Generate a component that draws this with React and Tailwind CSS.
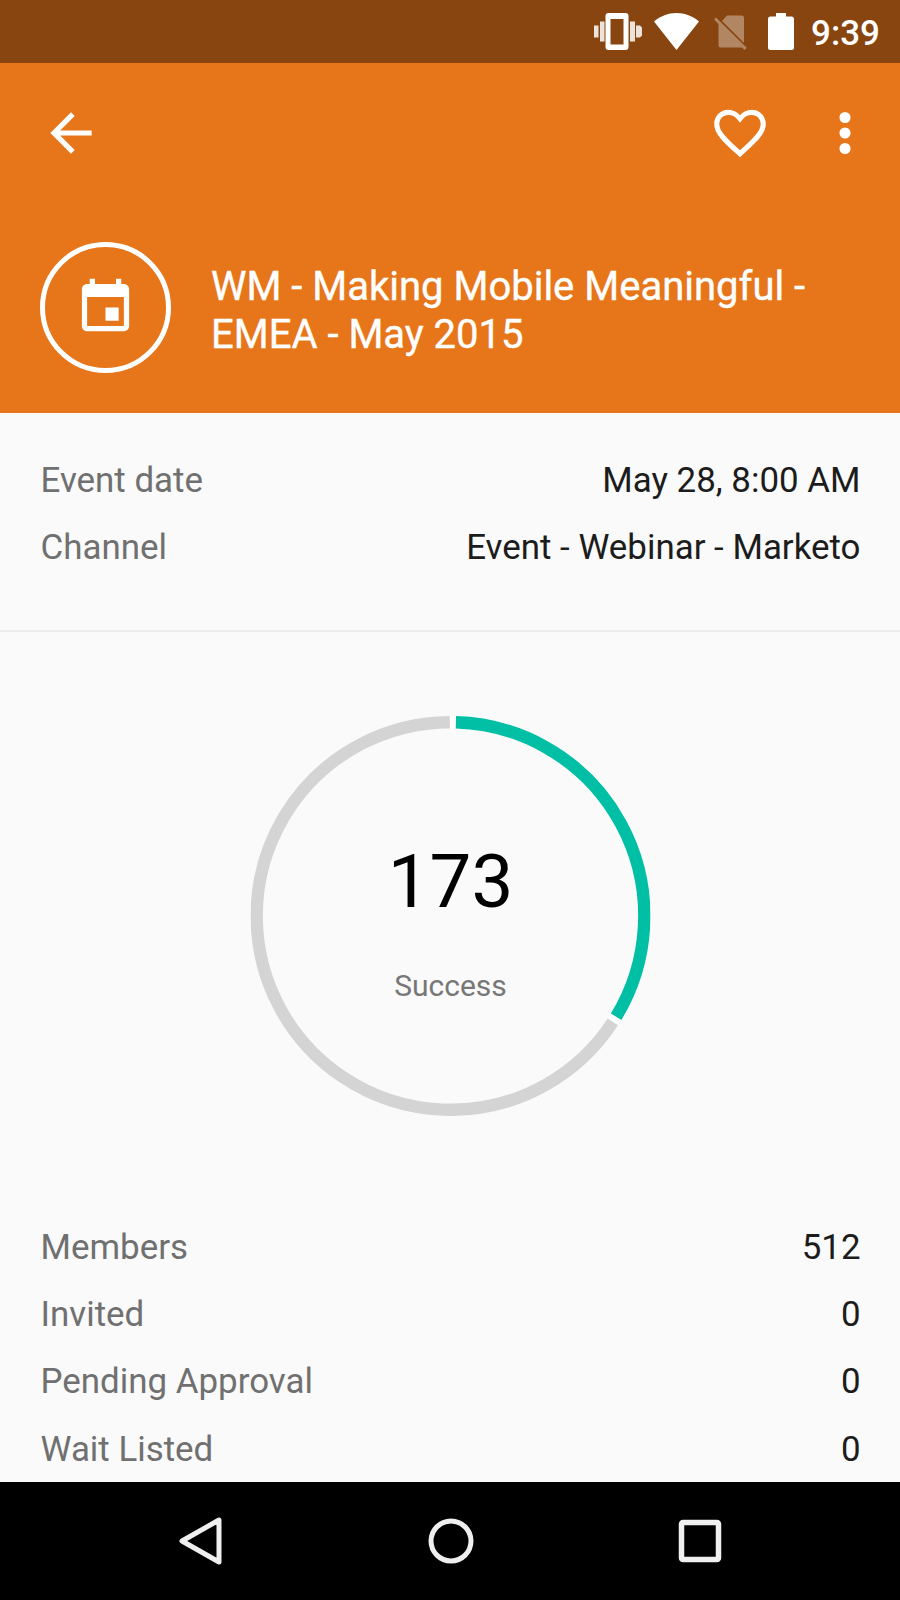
const eventDetails = [
  { label: "Event date", value: "May 28, 8:00 AM" },
  { label: "Channel", value: "Event - Webinar - Marketo" },
];

const memberCounts = [
  { label: "Members", value: "512" },
  { label: "Invited", value: "0" },
  { label: "Pending Approval", value: "0" },
  { label: "Wait Listed", value: "0" },
];

function StatusBar() {
  return (
    <div className="flex h-[63px] items-center justify-end bg-[#88450f] pr-[20px] text-white">
      <svg className="mr-3 h-[37px] w-[48px]" viewBox="0 0 48 37" fill="currentColor">
        <path fillRule="evenodd" d="M14.500 0h17a3 3 0 0 1 3 3v31a3 3 0 0 1-3 3h-17a3 3 0 0 1-3-3V3a3 3 0 0 1 3-3zM16.500 6v25.500h13V6z" />
        <path d="M6 8.500h4.500v20H6zM0 12.500h4.500v12H0zM36 8.500h5v20h-5zM42 12.500h4l2 2v8l-2 2h-4z" opacity=".85" />
      </svg>
      <svg className="mr-[15px] h-[37px] w-[45px]" viewBox="0 0 45 37" fill="currentColor">
        <path d="M22.500 37 0 8.500C6.500 3 14 0 22.500 0S38.500 3 45 8.500z" />
      </svg>
      <svg className="mr-[21px] h-[37px] w-[33px] opacity-35" viewBox="0 0 33 37" fill="currentColor">
        <path d="M13 2.500h14.500a2.500 2.500 0 0 1 2.500 2.500v25L8 8z" />
        <path d="M2 4.500 0 6.500 4.500 11V32.500A2 2 0 0 0 6.500 34.500H28L30.500 37l2.200-2.200z" />
      </svg>
      <svg className="mr-[17px] h-[37px] w-[26px]" viewBox="0 0 26 37" fill="currentColor">
        <path d="M8 0h10v3.500h5.500A2.500 2.500 0 0 1 26 6v28.500A2.500 2.500 0 0 1 23.500 37h-21A2.500 2.500 0 0 1 0 34.500V6a2.500 2.500 0 0 1 2.500-2.500H8z" />
      </svg>
      <span className="pt-1 text-[35px] leading-none font-medium">9:39</span>
    </div>
  );
}

function Header() {
  return (
    <header className="h-[350px] bg-[#e77519] text-white">
      <div className="flex items-center pt-[39px] pr-[24px] pl-[40px]">
        <svg className="size-[62px]" viewBox="0 0 24 24" fill="currentColor">
          <path d="M20 11H7.830l5.590-5.590L12 4l-8 8 8 8 1.410-1.410L7.830 13H20v-2z" />
        </svg>
        <svg className="mr-[43px] ml-auto size-[62px]" viewBox="0 0 24 24" fill="currentColor">
          <path d="M16.500 3c-1.740 0-3.410.810-4.500 2.090C10.910 3.810 9.240 3 7.500 3 4.420 3 2 5.420 2 8.500c0 3.780 3.400 6.860 8.550 11.540L12 21.350l1.450-1.320C18.600 15.360 22 12.280 22 8.500 22 5.420 19.580 3 16.500 3zm-4.400 15.550l-.100.100-.100-.100C7.140 14.240 4 11.390 4 8.500 4 6.500 5.500 5 7.500 5c1.540 0 2.840.690 3.670 1.960L12 8l.830-1.040C13.660 5.690 14.960 5 16.500 5c2 0 3.500 1.500 3.500 3.500 0 2.890-3.140 5.740-7.900 10.050z" />
        </svg>
        <svg className="size-[62px]" viewBox="0 0 24 24" fill="currentColor">
          <circle cx="12" cy="6" r="2.150" />
          <circle cx="12" cy="12" r="2.150" />
          <circle cx="12" cy="18" r="2.150" />
        </svg>
      </div>
      <div className="flex items-center gap-[40px] pt-[78px] pl-[40px]">
        <div className="flex size-[131px] items-center justify-center rounded-full border-[5px] border-white">
          <svg className="size-[63px]" viewBox="0 0 24 24" fill="currentColor">
            <path d="M17 12h-5v5h5v-5zM16 1v2H8V1H6v2H5c-1.110 0-1.990.900-1.990 2L3 19c0 1.100.890 2 2 2h14c1.100 0 2-.900 2-2V5c0-1.100-.900-2-2-2h-1V1h-2zm3 18H5V8h14v11z" />
          </svg>
        </div>
        <h1 className="pt-[6px] text-[40px] leading-[48px] font-normal [-webkit-text-stroke:0.4px_white]">
          WM - Making Mobile Meaningful -<br />
          EMEA - May 2015
        </h1>
      </div>
    </header>
  );
}

function DetailRows({ rows }) {
  return (
    <dl className="pr-[39.500px] pl-[40.500px] text-[34.900px] leading-[67.400px]">
      {rows.map((row) => (
        <div key={row.label} className="flex justify-between">
          <dt className="text-[#707070]">{row.label}</dt>
          <dd className="text-[#1c1c1c]">{row.value}</dd>
        </div>
      ))}
    </dl>
  );
}

const RADIUS = 193.8;

function arc(from, to) {
  const point = (deg) => {
    const a = (deg * Math.PI) / 180;
    return `${200 + RADIUS * Math.sin(a)} ${200 - RADIUS * Math.cos(a)}`;
  };
  return `M${point(from)}A${RADIUS} ${RADIUS} 0 ${to - from > 180 ? 1 : 0} 1 ${point(to)}`;
}

function SuccessChart() {
  return (
    <div className="mx-auto mt-[84px] grid size-[400px] translate-x-[0.500px] justify-items-center">
      <svg className="col-start-1 row-start-1 size-[400px]" viewBox="0 0 400 400" fill="none" strokeWidth="12.4">
        <circle cx="200" cy="200" r={RADIUS} stroke="#ffffff" />
        <path d={arc(1.6, 121.3)} stroke="#00bfa5" />
        <path d={arc(123.1, 359.8)} stroke="#d4d4d4" />
      </svg>
      <div className="col-start-1 row-start-1 flex flex-col items-center pt-[122px]">
        <span className="text-[74.500px] leading-[88px] text-black">173</span>
        <span className="mt-[42px] text-[30px] leading-[36px] text-[#777777]">Success</span>
      </div>
    </div>
  );
}

function NavigationBar() {
  return (
    <nav className="flex h-[118.500px] items-center justify-between bg-black px-[178px] text-[#efefef]">
      <svg className="h-[50px] w-[45px]" viewBox="0 0 45 50" fill="none" stroke="currentColor" strokeWidth="5" strokeLinejoin="round">
        <path d="M41 4v42L4 25z" />
      </svg>
      <svg className="size-[46px]" viewBox="0 0 46 46" fill="none" stroke="currentColor" strokeWidth="5">
        <circle cx="23" cy="23" r="20" />
      </svg>
      <svg className="size-[44px]" viewBox="0 0 44 44" fill="none" stroke="currentColor" strokeWidth="5.5">
        <rect x="3.500" y="3.500" width="37" height="37" rx="1.500" />
      </svg>
    </nav>
  );
}

export default function App() {
  return (
    <div className="flex h-[1600px] w-[900px] flex-col overflow-hidden bg-[#fafafa] font-['Roboto',sans-serif]">
      <StatusBar />
      <Header />
      <main className="min-h-0 flex-1">
        <section className="h-[218.500px] border-b-2 border-[#ececec] pt-[33.500px]">
          <DetailRows rows={eventDetails} />
        </section>
        <SuccessChart />
        <section className="pt-[98px]">
          <DetailRows rows={memberCounts} />
        </section>
      </main>
      <NavigationBar />
    </div>
  );
}
